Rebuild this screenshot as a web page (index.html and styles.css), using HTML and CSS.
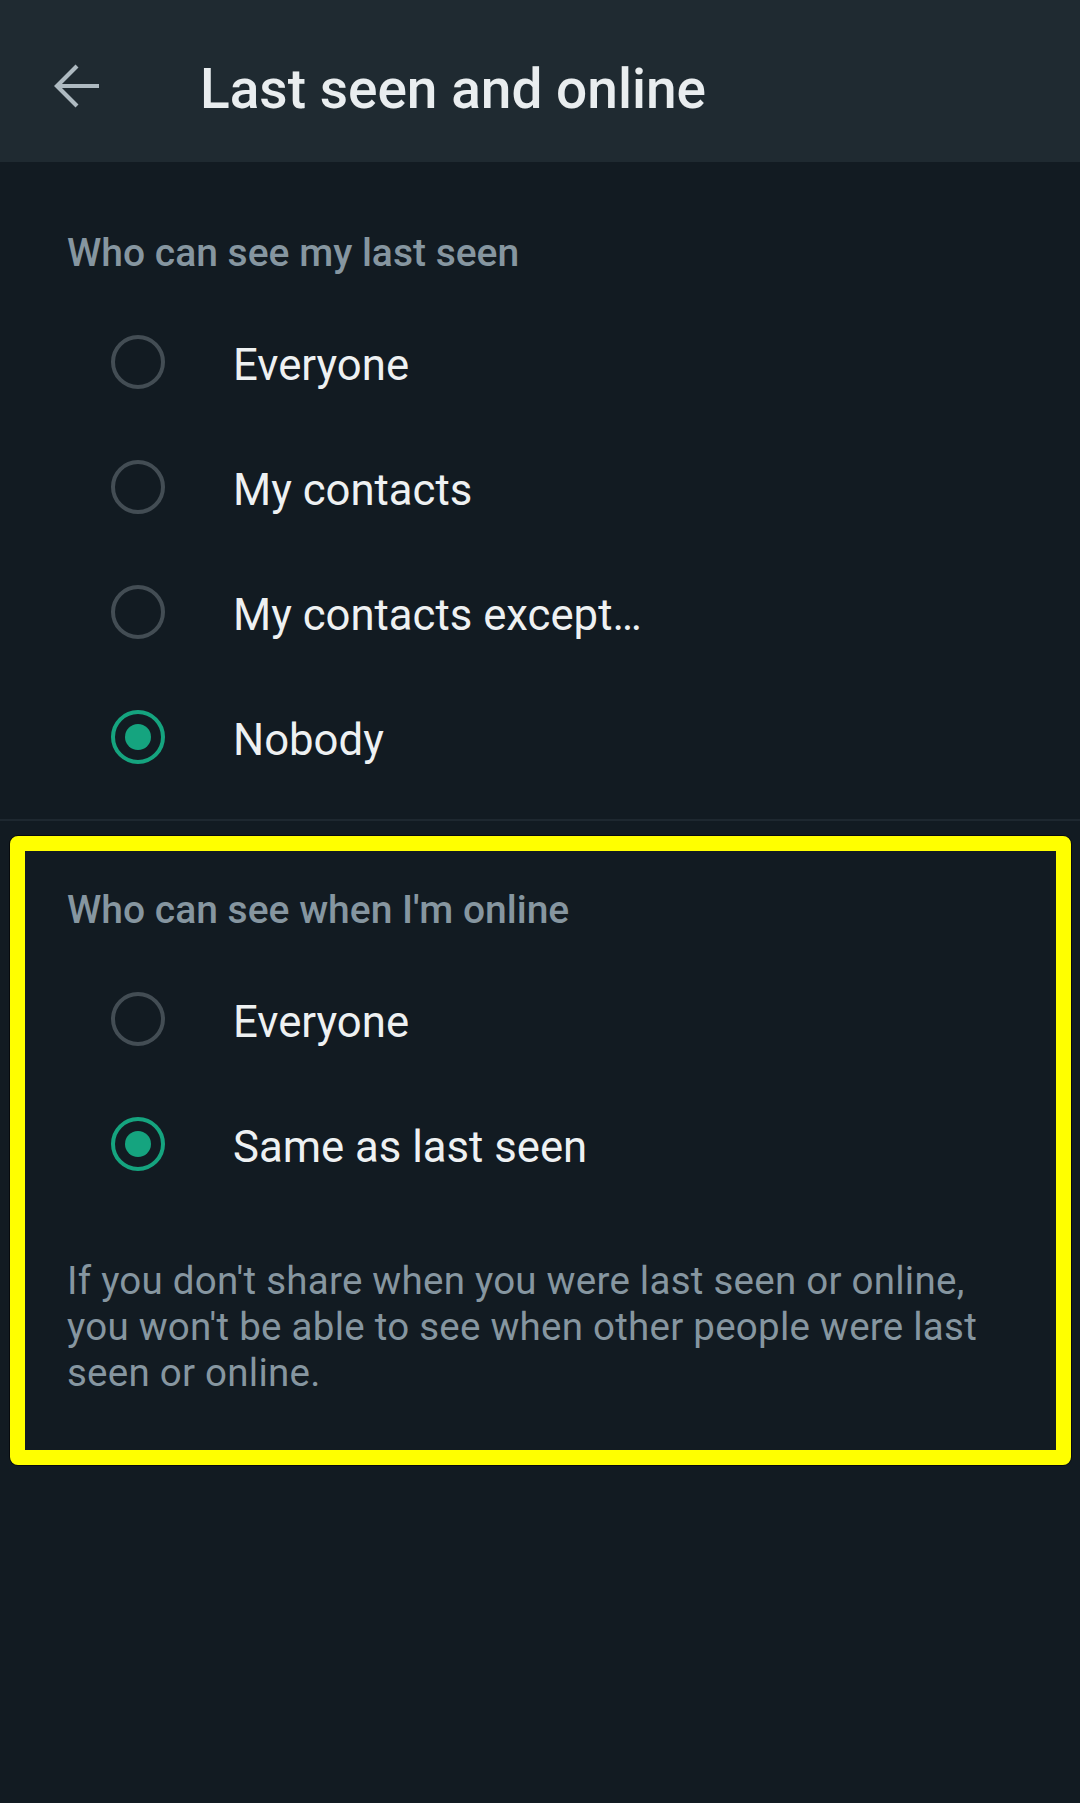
FILE: index.html
```html
<!DOCTYPE html>
<html lang="en">
<head>
<meta charset="utf-8">
<title>Last seen and online</title>
<link rel="stylesheet" href="styles.css">
</head>
<body>
<header class="appbar">
  <svg class="back" width="46" height="46" viewBox="0 0 46 46" aria-hidden="true">
    <path d="M3 23 H45 M23 3 L3 23 L23 43" fill="none" stroke="#aebac1" stroke-width="4.2" stroke-linejoin="miter"/>
  </svg>
  <h1 class="title">Last seen and online</h1>
</header>

<main class="content">
  <section class="group">
    <h2 class="group-title">Who can see my last seen</h2>
    <div class="option"><span class="radio"></span><span class="label">Everyone</span></div>
    <div class="option"><span class="radio"></span><span class="label">My contacts</span></div>
    <div class="option"><span class="radio"></span><span class="label">My contacts except…</span></div>
    <div class="option"><span class="radio checked"></span><span class="label">Nobody</span></div>
  </section>

  <hr class="divider">

  <section class="group second">
    <h2 class="group-title">Who can see when I'm online</h2>
    <div class="option"><span class="radio"></span><span class="label">Everyone</span></div>
    <div class="option"><span class="radio checked"></span><span class="label">Same as last seen</span></div>
    <p class="note">If you don't share when you were last seen or online, you won't be able to see when other people were last seen or online.</p>
  </section>

  <div class="highlight" aria-hidden="true"></div>
</main>
</body>
</html>
```

FILE: styles.css
```css
* { box-sizing: border-box; }

html, body {
  margin: 0;
  padding: 0;
}

body {
  width: 1080px;
  min-height: 1803px;
  background: #121b22;
  font-family: Roboto, "Liberation Sans", sans-serif;
  color: #e9edef;
  position: relative;
}

.appbar {
  height: 162px;
  background: #1f2a31;
  display: flex;
  align-items: center;
  padding: 10px 0 0 54px;
}

.back {
  display: block;
  flex: none;
}

.title {
  margin: 6px 0 0 100px;
  font-size: 55px;
  font-weight: 500;
  color: #e9edef;
  line-height: 1;
}

.content {
  position: relative;
}

.group {
  padding: 72px 67px 0 67px;
}

.group.second {
  padding-top: 70px;
}

.group-title {
  margin: 0 0 26px 0;
  font-size: 39px;
  line-height: 39px;
  font-weight: 500;
  color: #8696a0;
}

.option {
  height: 125px;
  display: flex;
  align-items: center;
  padding-left: 44px;
}

.radio {
  width: 54px;
  height: 54px;
  border-radius: 50%;
  border: 4.5px solid #434d54;
  flex: none;
  display: flex;
  align-items: center;
  justify-content: center;
}

.radio.checked {
  border-color: #15a47f;
}

.radio.checked::after {
  content: "";
  width: 26px;
  height: 26px;
  border-radius: 50%;
  background: #15a47f;
}

.label {
  margin-left: 68px;
  font-size: 43.7px;
  line-height: 52px;
  padding-top: 7px;
  color: #eef1f2;
}

.divider {
  margin: 20px 0 0 0;
  border: 0;
  height: 2px;
  background: #1e2830;
}

.note {
  margin: 52px 25px 0 0;
  font-size: 38.5px;
  letter-spacing: 0.25px;
  line-height: 46px;
  color: #8696a0;
}

.highlight {
  position: absolute;
  left: 10px;
  top: 674px;
  width: 1061px;
  height: 629px;
  border: 15px solid #ffff00;
  border-radius: 8px;
  box-shadow: 0 0 0 1px rgba(0, 0, 0, 0.6);
  pointer-events: none;
}
```
